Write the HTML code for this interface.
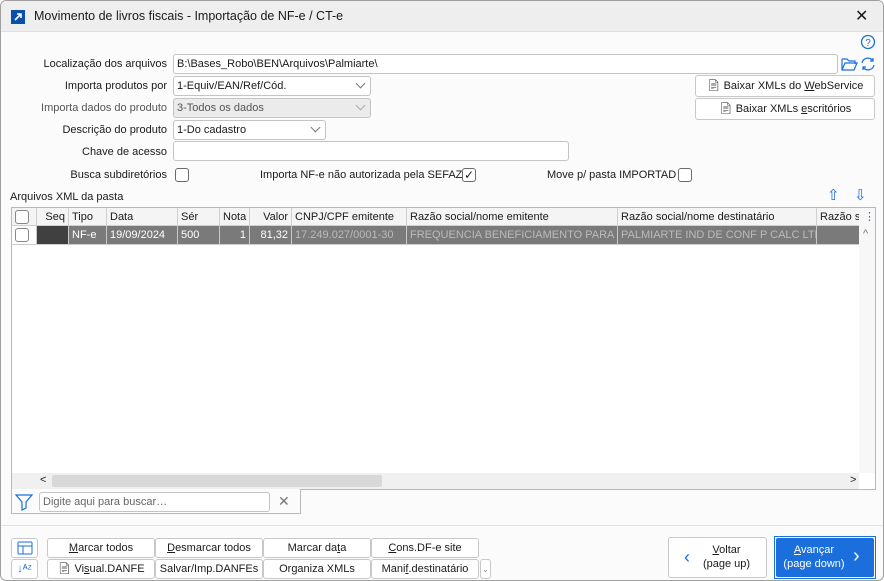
<!DOCTYPE html><html><head><meta charset="utf-8"><style>
*{box-sizing:border-box}body{margin:0;width:884px;height:581px;overflow:hidden;font-family:"Liberation Sans",sans-serif;font-size:11px;color:#1a1a1a;background:#fff}
.win{position:absolute;left:0;top:0;width:884px;height:581px;border:1px solid #a0a0a0;border-radius:6px;background:#fbfbfb;overflow:hidden}
.title{position:absolute;left:0;top:0;width:884px;height:31px;background:#eeeeee;border-bottom:1px solid #e0e0e0}
.a{position:absolute;white-space:nowrap}
.lbl{position:absolute;text-align:right;white-space:nowrap}
.inp{position:absolute;background:#fff;border:1px solid #c4c4c4;border-radius:3px;padding:3px 3px;height:20px;white-space:nowrap}
.dis{background:#ebebeb;color:#555}
.chev{position:absolute;right:6px;top:3px;width:7px;height:7px;border-right:1px solid #777;border-bottom:1px solid #777;transform:rotate(45deg)}
.cb{position:absolute;width:14px;height:14px;border:1px solid #6a6a6a;border-radius:3px;background:#fff}
.btn{position:absolute;border:1px solid #c8c8c8;border-radius:3px;background:#fff;text-align:center;line-height:19px;white-space:nowrap}
.th,.td{position:absolute;top:0;height:18px;line-height:18px;padding:0 3px;border-right:1px solid #d0d0d0;white-space:nowrap;overflow:hidden}
.td{border-right:1px solid #c8c8c8;color:#fff}
u{text-decoration:underline}
</style></head><body><div class="win">
<div class="title"></div>
<div class="a" style="left:10px;top:9px;width:14px;height:14px;background:#0b4fa8"><svg width="14" height="14"><path d="M4 10L10 4M6 4H10V8" stroke="#fff" stroke-width="1.6" fill="none"/></svg></div>
<div class="a" style="left:33px;top:8px;font-size:12.5px">Movimento de livros fiscais - Importação de NF-e / CT-e</div>
<div class="a" style="left:854px;top:5px;font-size:16px">✕</div>
<svg class="a" style="left:859px;top:33px" width="16" height="16"><circle cx="8" cy="8" r="6.5" stroke="#1a6fdd" fill="none" stroke-width="1.3"/><text x="8" y="12" font-size="10" text-anchor="middle" fill="#1a6fdd" font-family="Liberation Sans">?</text></svg>

<div class="lbl" style="right:716px;top:57px">Localização dos arquivos</div>
<div class="inp" style="left:172px;top:53px;width:665px">B:\Bases_Robo\BEN\Arquivos\Palmiarte\</div>
<svg class="a" style="left:839px;top:54px" width="36" height="18"><path d="M2 4h5l2 2h6v3M2 4v11h12l3-7H5L2 15" stroke="#1a6fdd" fill="none" stroke-width="1.2"/><path d="M22 8a6 6 0 0 1 11-2M34 10a6 6 0 0 1-11 2M33 3v3h-3M23 15v-3h3" stroke="#1a6fdd" fill="none" stroke-width="1.2"/></svg>

<div class="lbl" style="right:716px;top:79px">Importa produtos por</div>
<div class="inp" style="left:172px;top:75px;width:198px">1-Equiv/EAN/Ref/Cód.<span class="chev"></span></div>
<div class="lbl" style="right:716px;top:101px;color:#555">Importa dados do produto</div>
<div class="inp dis" style="left:172px;top:97px;width:198px">3-Todos os dados<span class="chev" style="border-color:#aaa"></span></div>
<div class="lbl" style="right:716px;top:123px">Descrição do produto</div>
<div class="inp" style="left:172px;top:119px;width:153px">1-Do cadastro<span class="chev"></span></div>
<div class="lbl" style="right:716px;top:145px">Chave de acesso</div>
<div class="inp" style="left:172px;top:140px;width:396px"></div>
<div class="lbl" style="right:716px;top:168px">Busca subdiretórios</div>
<div class="cb" style="left:174px;top:167px"></div>
<div class="a" style="left:259px;top:168px">Importa NF-e não autorizada pela SEFAZ</div>
<div class="cb" style="left:461px;top:167px;font-size:12px;line-height:12px;text-align:center">✓</div>
<div class="a" style="left:546px;top:168px">Move p/ pasta IMPORTAD</div>
<div class="cb" style="left:677px;top:167px"></div>

<div class="btn" style="left:694px;top:74px;width:180px;height:22px;line-height:21px">📄&#xFE0E; Baixar XMLs do <u>W</u>ebService</div>
<div class="btn" style="left:694px;top:97px;width:180px;height:22px;line-height:21px">📄&#xFE0E; Baixar XMLs <u>e</u>scritórios</div>

<div class="a" style="left:9px;top:190px">Arquivos XML da pasta</div>
<div class="a" style="left:826px;top:185px;color:#1a6fdd;font-size:15px">⇧</div>
<div class="a" style="left:853px;top:185px;color:#1a6fdd;font-size:15px">⇩</div>

<div class="a" style="left:10px;top:206px;width:865px;height:283px;border:1px solid #b8b8b8;background:#fff">
<div class="a" style="left:0;top:0;width:847px;height:18px;background:#f4f4f4;border-bottom:1px solid #d0d0d0">
<div class="th" style="left:0;width:25px"><span class="cb" style="left:3px;top:2px;border-color:#888"></span></div>
<div class="th" style="left:25px;width:32px;text-align:right">Seq</div>
<div class="th" style="left:57px;width:38px">Tipo</div>
<div class="th" style="left:95px;width:71px">Data</div>
<div class="th" style="left:166px;width:42px">Sér</div>
<div class="th" style="left:208px;width:30px;text-align:right">Nota</div>
<div class="th" style="left:238px;width:42px;text-align:right">Valor</div>
<div class="th" style="left:280px;width:115px">CNPJ/CPF emitente</div>
<div class="th" style="left:395px;width:211px">Razão social/nome emitente</div>
<div class="th" style="left:606px;width:199px">Razão social/nome destinatário</div>
<div class="th" style="left:805px;width:43px">Razão so</div>
</div>
<div class="a" style="left:0;top:18px;width:847px;height:19px;background:#7a7a7a;border-bottom:1px solid #ccc">
<div class="td" style="left:0;width:25px;background:#fff"><span class="cb" style="left:3px;top:2px;border-color:#888"></span></div>
<div class="td" style="left:25px;width:32px;background:#404040"></div>
<div class="td" style="left:57px;width:38px">NF-e</div>
<div class="td" style="left:95px;width:71px">19/09/2024</div>
<div class="td" style="left:166px;width:42px">500</div>
<div class="td" style="left:208px;width:30px;text-align:right">1</div>
<div class="td" style="left:238px;width:42px;text-align:right">81,32</div>
<div class="td" style="left:280px;width:115px;color:#bbb">17.249.027/0001-30</div>
<div class="td" style="left:395px;width:211px;color:#bbb">FREQUENCIA BENEFICIAMENTO PARA C</div>
<div class="td" style="left:606px;width:199px;color:#bbb">PALMIARTE IND DE CONF P CALC LTD</div>
</div>
<div class="a" style="left:847px;top:0;width:16px;height:265px;background:#f7f7f7"><div class="a" style="left:5px;top:2px;color:#1a6fdd;font-size:11px">⋮</div><div class="a" style="left:4px;top:20px;color:#777">^</div></div>
<div class="a" style="left:0;top:265px;width:847px;height:16px;background:#f0f0f0"><div class="a" style="left:28px;top:1px">&lt;</div><div class="a" style="left:40px;top:2px;width:330px;height:12px;background:#d8d8d8;border-radius:2px"></div><div class="a" style="left:838px;top:1px">&gt;</div></div>
</div>
<div class="a" style="left:10px;top:488px;width:290px;height:25px;border:1px solid #b8b8b8;border-top:none;background:#fbfbfb"></div>
<svg class="a" style="left:13px;top:492px" width="20" height="18"><path d="M2 2h16l-6 7v6l-4 2V9z" stroke="#1a6fdd" fill="none" stroke-width="1.2"/></svg>
<div class="inp" style="left:38px;top:491px;width:231px;height:20px;color:#666">Digite aqui para buscar…</div>
<div class="a" style="left:277px;top:492px;color:#777;font-size:14px">✕</div>

<div class="a" style="left:0;top:524px;width:884px;border-top:1px solid #e0e0e0"></div>
<div class="btn" style="left:10px;top:537px;width:27px;height:20px"><svg width="16" height="14" style="margin-top:2px"><rect x="1" y="1" width="14" height="12" rx="1" stroke="#1a6fdd" fill="none"/><path d="M1 5h14M6 5v8" stroke="#1a6fdd"/></svg></div>
<div class="btn" style="left:10px;top:558px;width:27px;height:20px;color:#1a6fdd;font-size:11px">↓ᴬᶻ</div>
<div class="btn" style="left:46px;top:537px;width:108px;height:20px"><u>M</u>arcar todos</div>
<div class="btn" style="left:154px;top:537px;width:108px;height:20px"><u>D</u>esmarcar todos</div>
<div class="btn" style="left:262px;top:537px;width:108px;height:20px">Marcar da<u>t</u>a</div>
<div class="btn" style="left:370px;top:537px;width:108px;height:20px"><u>C</u>ons.DF-e site</div>
<div class="btn" style="left:46px;top:558px;width:108px;height:20px">📄&#xFE0E; Vi<u>s</u>ual.DANFE</div>
<div class="btn" style="left:154px;top:558px;width:108px;height:20px">Salvar/Imp.DANFEs</div>
<div class="btn" style="left:262px;top:558px;width:108px;height:20px">Organiza XMLs</div>
<div class="btn" style="left:370px;top:558px;width:108px;height:20px">Mani<u>f</u>.destinatário</div>
<div class="btn" style="left:479px;top:558px;width:11px;height:20px;font-size:8px;color:#888">⌄</div>

<div class="btn" style="left:667px;top:536px;width:99px;height:41px;line-height:14px;padding-top:5px;padding-left:18px"><u>V</u>oltar<br>(page up)</div>
<div class="a" style="left:683px;top:546px;color:#1a6fdd;font-size:18px">‹</div>
<div class="a" style="left:773px;top:535px;width:102px;height:43px;border:1px solid #1a6fdd;padding:1px"><div style="width:98px;height:39px;background:#1b6fdd;border-radius:2px;color:#fff;line-height:14px;padding-top:5px;text-align:left;padding-left:0"><div style="width:76px;text-align:center"><u>A</u>vançar<br>(page down)</div></div></div>
<div class="a" style="left:852px;top:544px;color:#fff;font-size:20px">›</div>
</div></body></html>
